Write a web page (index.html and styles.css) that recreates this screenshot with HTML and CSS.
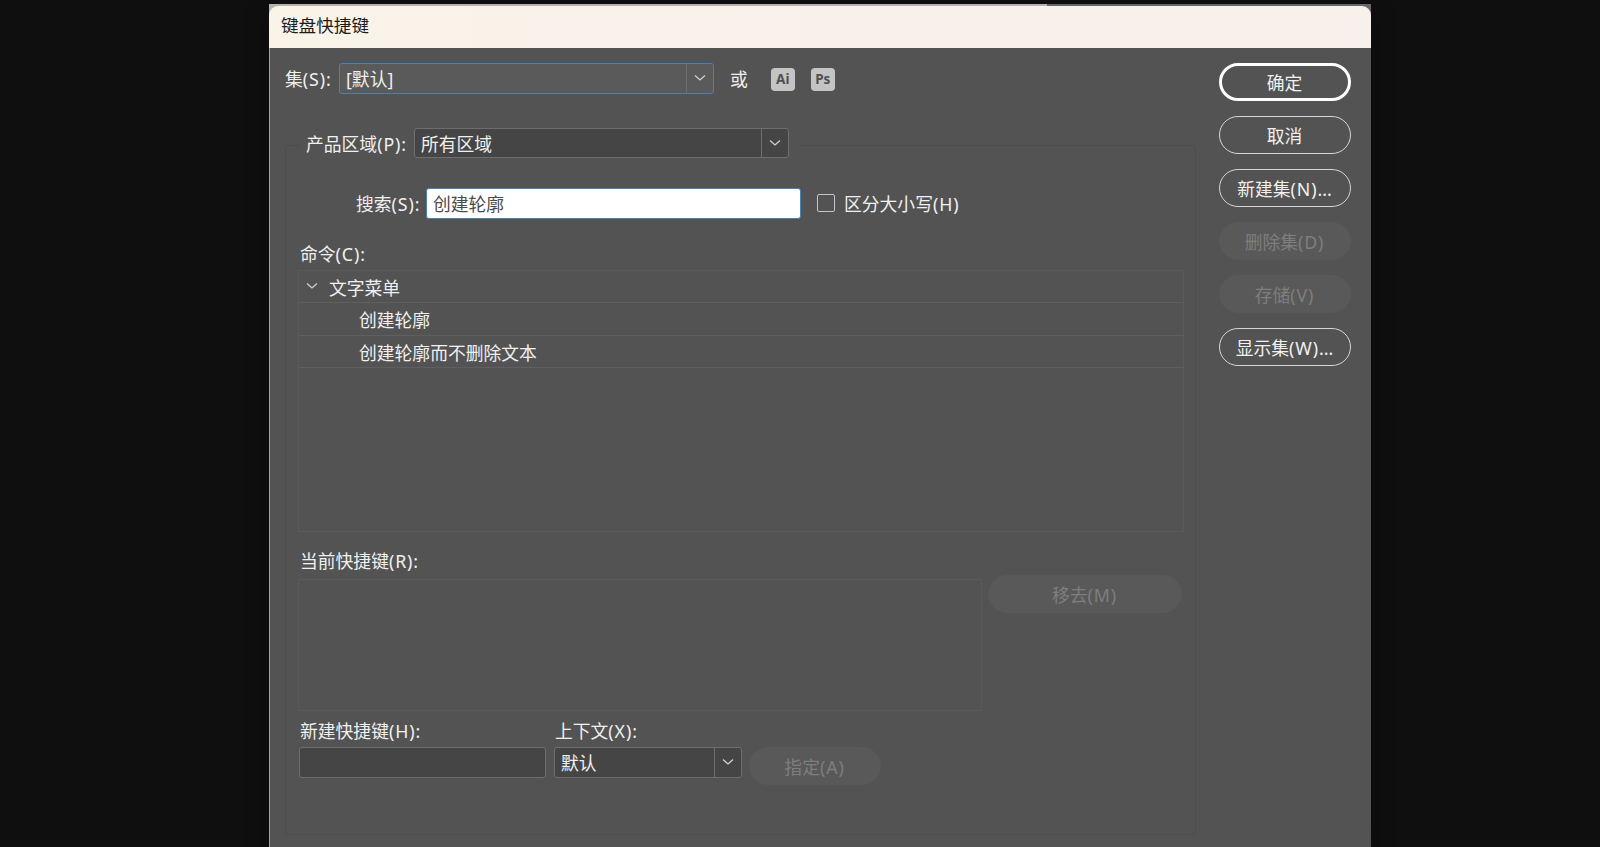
FILE: index.html
```html
<!DOCTYPE html>
<html lang="zh-CN">
  <head>
    <meta charset="UTF-8" />
    <meta name="viewport" content="width=device-width, initial-scale=1.0" />
    <title>键盘快捷键</title>
    <link rel="stylesheet" href="styles.css">
  </head>

  <body>
    <div class="window">
      <div class="titlebar">键盘快捷键</div>

      <div class="content">
        <div class="main">
          <div class="row set-row">
            <label class="label">集<span class="key">(S):</span></label>
            <div class="select active">
              <span class="value">[默认]</span>
              <span class="arrow">
                <svg width="12" height="8" viewBox="0 0 12 8"><path d="M1 1.5 L6 6 L11 1.5" /></svg>
              </span>
            </div>
            <span class="or">或</span>
            <span class="app-icon">Ai</span>
            <span class="app-icon">Ps</span>
          </div>

          <div class="panel">
            <div class="row area-row">
              <label class="label">产品区域<span class="key">(P):</span></label>
              <div class="select">
                <span class="value">所有区域</span>
                <span class="arrow">
                  <svg width="12" height="8" viewBox="0 0 12 8"><path d="M1 1.5 L6 6 L11 1.5" /></svg>
                </span>
              </div>
            </div>

            <div class="row search-row">
              <label class="label">搜索<span class="key">(S):</span></label>
              <div class="search">创建轮廓</div>
              <span class="checkbox"></span>
              <span>区分大小写<span class="key">(H)</span></span>
            </div>

            <div class="heading">命令<span class="key">(C):</span></div>
            <div class="list">
              <div class="item group">
                <svg width="12" height="8" viewBox="0 0 12 8"><path d="M1 1.5 L6 6 L11 1.5" /></svg>
                <span>文字菜单</span>
              </div>
              <div class="item">创建轮廓</div>
              <div class="item">创建轮廓而不删除文本</div>
            </div>

            <div class="heading current">当前快捷键<span class="key">(R):</span></div>
            <div class="shortcut-row">
              <div class="shortcut-box"></div>
              <button class="button remove" disabled>移去<span class="key">(M)</span></button>
            </div>

            <div class="assign-row">
              <div class="field key-field">
                <label class="label">新建快捷键<span class="key">(H):</span></label>
                <div class="key-input"></div>
              </div>
              <div class="field context-field">
                <label class="label">上下文<span class="key">(X):</span></label>
                <div class="select">
                  <span class="value">默认</span>
                  <span class="arrow">
                    <svg width="12" height="8" viewBox="0 0 12 8"><path d="M1 1.5 L6 6 L11 1.5" /></svg>
                  </span>
                </div>
              </div>
              <button class="button" disabled>指定<span class="key">(A)</span></button>
            </div>
          </div>
        </div>

        <div class="side">
          <button class="button primary">确定</button>
          <button class="button">取消</button>
          <button class="button">新建集<span class="key">(N)</span>...</button>
          <button class="button" disabled>删除集<span class="key">(D)</span></button>
          <button class="button" disabled>存储<span class="key">(V)</span></button>
          <button class="button">显示集<span class="key">(W)</span>...</button>
        </div>
      </div>
    </div>
  </body>
</html>
```
FILE: styles.css
```css
* {
  box-sizing: border-box;
}

body {
  margin: 0;
  height: 847px;
  overflow: hidden;
  background-color: #0f0f0f;
  font-family: "Noto Sans", "Noto Sans CJK SC", sans-serif;
  font-size: 17.8px;
  line-height: 24px;
  color: #f0f0f0;
  white-space: nowrap;
}

svg {
  display: block;
  fill: none;
  stroke: #d0d0d0;
  stroke-width: 1.3;
}

.key {
  letter-spacing: 0.9px;
}

.window {
  width: 1102px;
  height: 843px;
  margin: 4px 0 0 269px;
  padding-top: 2px;
  background: linear-gradient(to right, #b5b2b1 778px, #686666 778px) no-repeat;
  background-size: 100% 10px;
  display: flex;
  flex-direction: column;
  box-shadow: 0 8px 24px rgba(0, 0, 0, 0.3);
}

.titlebar {
  height: 42px;
  padding: 7px 12px 0;
  background: linear-gradient(to right, #f9f3e8, #f8f0eb 60%);
  border-radius: 9px 9px 0 0;
  font-size: 17.6px;
  color: #1c1c1c;
}

.content {
  flex: 1;
  min-height: 0;
  display: flex;
  justify-content: space-between;
  padding: 15px 20px 0 15px;
  background-color: #535353;
  border-left: 1px solid #a5a5a5;
}

.main {
  width: 911px;
}

.row {
  display: flex;
  align-items: center;
}

.row .label {
  padding-top: 1px;
}

.set-row {
  height: 31px;
}

.set-row .label {
  width: 54px;
}

.select {
  display: flex;
  width: 375px;
  height: 31px;
  background-color: #454545;
  border: 1px solid #6e6e6e;
  border-radius: 3px;
}

.select .value {
  flex: 1;
  padding: 3px 0 0 6px;
}

.arrow {
  width: 27px;
  padding: 10px 0 0 7px;
  border-left: 1px solid #6e6e6e;
}

.select.active {
  background-color: #5a5a5a;
  border-color: #4a80b8;
}

.or {
  margin: 0 23px 0 16px;
}

.app-icon {
  width: 24px;
  height: 23px;
  margin: 2px 16px 0 0;
  background-color: #c4c4c4;
  border-radius: 4px;
  font-size: 13.5px;
  font-weight: 700;
  line-height: 23px;
  text-align: center;
  color: #505050;
}

.panel {
  height: 690px;
  margin-top: 51px;
  padding: 0 11px 0 13px;
  border: 1px solid #4d4d4d;
  border-radius: 4px;
}

/* sits on top of the panel border */
.area-row {
  width: 501px;
  height: 31px;
  margin-top: -18px;
  padding-left: 7px;
  background-color: #535353;
}

.area-row .label {
  width: 108px;
}

.area-row .select {
  height: 30px;
  margin-bottom: 1px;
}

.search-row {
  height: 31px;
  margin: 29px 0 0 57px;
}

.search-row .label {
  width: 70px;
}

.search {
  width: 375px;
  height: 31px;
  padding: 3px 0 0 6px;
  background-color: #fff;
  border: 1px solid #4a80b8;
  border-radius: 3px;
  color: #4a4a4a;
}

.checkbox {
  width: 18px;
  height: 18px;
  margin: 0 9px 2px 16px;
  border: 1.5px solid #c6c6c6;
  border-radius: 2px;
}

.heading {
  height: 28px;
  margin: 23px 0 0 1px;
}

.list {
  height: 262px;
  margin-left: -1px;
  border: 1px solid #5a5a5a;
}

.item {
  height: 32.5px;
  padding: 5px 0 0 60px;
  border-bottom: 1px solid #5f5f5f;
}

.group {
  display: flex;
  height: 32px;
  padding-left: 7px;
}

.group svg {
  margin: 6px 11px 0 0;
}

.current {
  height: 28px;
  margin-top: 17px;
}

.shortcut-row {
  display: flex;
  gap: 6px;
  margin: -2px 0 0 -1px;
}

.shortcut-box {
  width: 684px;
  height: 132px;
  margin-top: 4px;
  border: 1px solid #5a5a5a;
}

.assign-row {
  display: flex;
  align-items: flex-end;
  margin-top: 8px;
}

.field {
  display: flex;
  flex-direction: column;
}

.field .label {
  height: 28px;
  padding-left: 1px;
}

.key-field {
  width: 247px;
  margin-right: 8px;
}

.key-input {
  height: 31px;
  background-color: #454545;
  border: 1px solid #6e6e6e;
  border-radius: 3px;
}

.context-field .select {
  width: 188px;
}

.side {
  display: flex;
  flex-direction: column;
  gap: 15px;
}

.button {
  width: 132px;
  height: 38px;
  padding: 2px 1px 0 0;
  background: none;
  border: 1px solid #d6d6d6;
  border-radius: 19px;
  font: inherit;
  line-height: 24px;
  color: #f0f0f0;
}

.button.primary {
  border: 3px solid #fff;
}

.button:disabled {
  background-color: #595959;
  border-color: #595959;
  color: #7e7e7e;
}

.button.remove {
  width: 194px;
}

.assign-row .button {
  margin: 0 0 -7px 7px;
}
```
